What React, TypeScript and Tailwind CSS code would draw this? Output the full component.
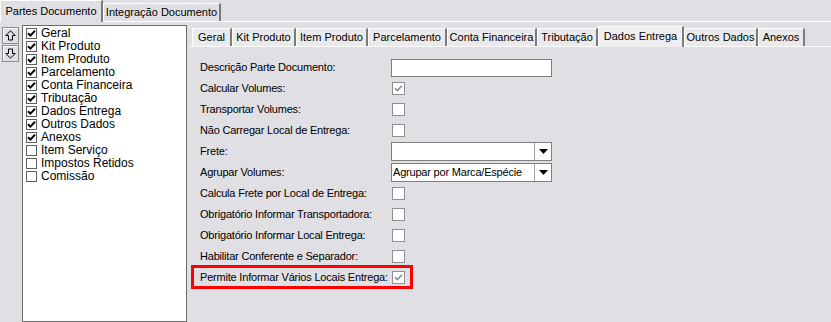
import React from 'react'

const listItems = [
  { label: 'Geral', checked: true },
  { label: 'Kit Produto', checked: true },
  { label: 'Item Produto', checked: true },
  { label: 'Parcelamento', checked: true },
  { label: 'Conta Financeira', checked: true },
  { label: 'Tributação', checked: true },
  { label: 'Dados Entrega', checked: true },
  { label: 'Outros Dados', checked: true },
  { label: 'Anexos', checked: true },
  { label: 'Item Serviço', checked: false },
  { label: 'Impostos Retidos', checked: false },
  { label: 'Comissão', checked: false },
]

const innerTabs = [
  { label: 'Geral', w: 'w-[40px]' },
  { label: 'Kit Produto', w: 'w-[64px]' },
  { label: 'Item Produto', w: 'w-[72px]' },
  { label: 'Parcelamento', w: 'w-[79px]' },
  { label: 'Conta Financeira', w: 'w-[90px]' },
  { label: 'Tributação', w: 'w-[61px]' },
  { label: 'Dados Entrega', w: 'w-[86px]', active: true },
  { label: 'Outros Dados', w: 'w-[74px]' },
  { label: 'Anexos', w: 'w-[47px]' },
]

type Row =
  | { label: string; kind: 'input' }
  | { label: string; kind: 'check'; checked?: boolean }
  | { label: string; kind: 'combo'; value?: string }

const rows: Row[] = [
  { label: 'Descrição Parte Documento:', kind: 'input' },
  { label: 'Calcular Volumes:', kind: 'check', checked: true },
  { label: 'Transportar Volumes:', kind: 'check' },
  { label: 'Não Carregar Local de Entrega:', kind: 'check' },
  { label: 'Frete:', kind: 'combo' },
  { label: 'Agrupar Volumes:', kind: 'combo', value: 'Agrupar por Marca/Espécie' },
  { label: 'Calcula Frete por Local de Entrega:', kind: 'check' },
  { label: 'Obrigatório Informar Transportadora:', kind: 'check' },
  { label: 'Obrigatório Informar Local Entrega:', kind: 'check' },
  { label: 'Habilitar Conferente e Separador:', kind: 'check' },
  { label: 'Permite Informar Vários Locais Entrega:', kind: 'check', checked: true },
]

function ArrowButton({ down }: { down?: boolean }) {
  return (
    <div className="w-[17px] h-[17px] border border-[#8c8c8c] bg-[#e0dfe3] shadow-[inset_1px_1px_0_#ffffff] flex items-center justify-center">
      <svg width="11" height="11" viewBox="0 0 11 11" className={down ? 'rotate-180' : ''}>
        <path d="M5.5 0.8 L10.2 5.5 L7.5 5.5 L7.5 10 L3.5 10 L3.5 5.5 L0.8 5.5 Z" fill="none" stroke="#000" strokeWidth="1" />
      </svg>
    </div>
  )
}

function ListCheck({ checked }: { checked: boolean }) {
  return (
    <span className="w-[11px] h-[11px] border border-[#5f5f5f] bg-white flex items-center justify-center shrink-0">
      {checked && (
        <svg width="9" height="9" viewBox="0 0 9 9">
          <path d="M1 4.2 L3.4 6.6 L8 1.8" fill="none" stroke="#000" strokeWidth="2" />
        </svg>
      )}
    </span>
  )
}

function FormCheck({ checked }: { checked?: boolean }) {
  return (
    <span className="ml-[1px] w-[13px] h-[13px] border border-[#8f8f8f] bg-white flex items-center justify-center">
      {checked && (
        <svg width="9" height="9" viewBox="0 0 9 9">
          <path d="M1 4.2 L3.4 6.6 L8 1.8" fill="none" stroke="#8a8a8a" strokeWidth="1.6" />
        </svg>
      )}
    </span>
  )
}

function Combo({ value }: { value?: string }) {
  return (
    <div className="w-[161px] h-[19px] border border-[#7f7f7f] bg-white flex">
      <span className="flex-1 pl-[1px] leading-[17px] text-black whitespace-nowrap">{value}</span>
      <span className="w-[17px] border-l border-[#a0a0a0] flex items-center justify-center">
        <svg width="9" height="5" viewBox="0 0 9 5">
          <path d="M0 0 L9 0 L4.5 5 Z" fill="#000" />
        </svg>
      </span>
    </div>
  )
}

export default function App() {
  return (
    <div className="w-[831px] h-[322px] overflow-hidden bg-[#e0dfe3] text-[11px] text-black font-['Liberation_Sans',Arial,sans-serif]">
      {/* Outer tabs */}
      <div className="h-[22px] flex items-end border-b border-white">
        <div className="-mb-px h-[22px] w-[103px] border-t border-l border-white border-r-2 border-r-[#7a7a7a] bg-[#e0dfe3] flex items-center justify-center">
          Partes Documento
        </div>
        <div className="h-[18px] w-[118px] border-t border-l border-white border-r-2 border-r-[#7a7a7a] flex items-center justify-center">
          Integração Documento
        </div>
      </div>

      <div className="flex h-[300px]">
        {/* Up / down buttons */}
        <div className="w-[22px] pl-[2px] pt-[5px] flex flex-col gap-[1px]">
          <ArrowButton />
          <ArrowButton down />
        </div>

        {/* Check list */}
        <div className="mt-[3px] w-[165px] border border-[#6b6b6b] bg-white pl-[3px] pt-[1px] text-[12px]">
          {listItems.map((item) => (
            <div key={item.label} className="h-[13px] flex items-center">
              <ListCheck checked={item.checked} />
              <span className="ml-[4px] leading-[13px] whitespace-nowrap">{item.label}</span>
            </div>
          ))}
        </div>

        {/* Inner tab control */}
        <div className="ml-[3px] flex-1 pt-[4px]">
          <div className="h-[21px] flex items-end border-b border-white pl-[2px]">
            {innerTabs.map((t) =>
              t.active ? (
                <div
                  key={t.label}
                  className={`${t.w} -mb-px h-[21px] border-t border-l border-white border-r-2 border-r-[#7a7a7a] bg-[#efeff1] flex items-center justify-center pb-[2px]`}
                >
                  {t.label}
                </div>
              ) : (
                <div
                  key={t.label}
                  className={`${t.w} h-[18px] border-t border-l border-white border-r-2 border-r-[#7a7a7a] bg-[#eaeaec] flex items-center justify-center`}
                >
                  {t.label}
                </div>
              )
            )}
          </div>

          <div className="pt-[10px] pl-[10px] tracking-[-0.2px]">
            {rows.map((r) => {
              const last = r.label.startsWith('Permite')
              return (
                <div key={r.label} className="relative h-[21px] flex items-center">
                  {last && (
                    <span className="absolute left-[-9px] top-[-2px] w-[222px] h-[24px] border-[3px] border-[#ff0000]" />
                  )}
                  <span className="w-[191px] leading-[13px] whitespace-nowrap">{r.label}</span>
                  {r.kind === 'input' && <div className="w-[161px] h-[18px] border border-[#7f7f7f] bg-white" />}
                  {r.kind === 'check' && <FormCheck checked={r.checked} />}
                  {r.kind === 'combo' && <Combo value={r.value} />}
                </div>
              )
            })}
          </div>
        </div>
      </div>
    </div>
  )
}
